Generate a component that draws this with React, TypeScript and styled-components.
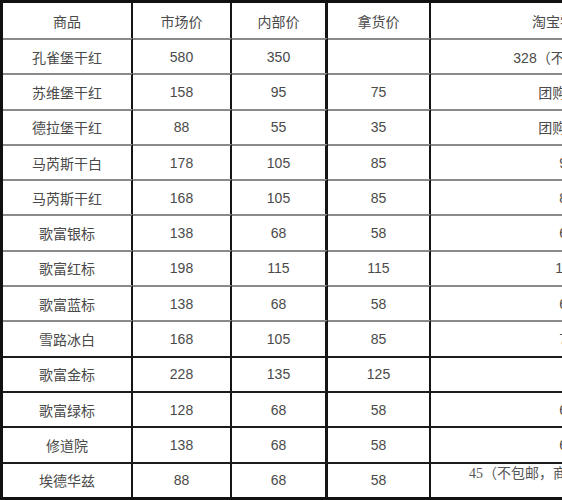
import React from 'react';
import styled, { createGlobalStyle } from 'styled-components';

const GlobalStyle = createGlobalStyle`
  html, body {
    margin: 0;
    padding: 0;
    background: #ffffff;
    overflow: hidden;
  }
`;

export const Page = styled.div`
  width: 562px;
  height: 500px;
  overflow: hidden;
  background: #fff;
`;

export const Table = styled.table`
  border-collapse: separate;
  border-spacing: 0;
  table-layout: fixed;
  width: 705px;
  border-top: 3px solid #111;
  border-left: 3px solid #111;
  border-bottom: 3px solid #111;
  font-family: 'Liberation Sans', 'Noto Sans CJK SC', sans-serif;
  font-size: 14px;
  color: #4a4a4a;
`;

export const HeadCell = styled.th<{ $w: number; $thick?: boolean }>`
  box-sizing: border-box;
  width: ${(p) => p.$w}px;
  height: 35px;
  padding: 0;
  font-weight: normal;
  text-align: center;
  vertical-align: middle;
  white-space: nowrap;
  overflow: hidden;
  border-right: ${(p) => (p.$thick ? 3 : 2)}px solid #151515;
`;

export const Cell = styled.td<{ $dark?: boolean; $thick?: boolean; $top?: boolean }>`
  box-sizing: border-box;
  height: 35.3px;
  padding: 0;
  text-align: center;
  vertical-align: ${(p) => (p.$top ? 'top' : 'middle')};
  white-space: nowrap;
  overflow: hidden;
  border-top: 2px solid ${(p) => (p.$dark ? '#1c1c1c' : '#8a8a8a')};
  border-right: ${(p) => (p.$thick ? 3 : 2)}px solid #151515;
`;

export const Note = styled.span`
  display: block;
  padding-top: 1px;
  line-height: 17px;
  font-family: 'Liberation Serif', 'Noto Sans CJK SC', serif;
  color: #555;
`;

type Row = { name: string; market: string; inner: string; pick: string; taobao: string; note?: boolean };

const rows: Row[] = [
  { name: '孔雀堡干红', market: '580', inner: '350', pick: '', taobao: '328（不包邮费）' },
  { name: '苏维堡干红', market: '158', inner: '95', pick: '75', taobao: '团购价98' },
  { name: '德拉堡干红', market: '88', inner: '55', pick: '35', taobao: '团购价58' },
  { name: '马芮斯干白', market: '178', inner: '105', pick: '85', taobao: '98' },
  { name: '马芮斯干红', market: '168', inner: '105', pick: '85', taobao: '88' },
  { name: '歌富银标', market: '138', inner: '68', pick: '58', taobao: '68' },
  { name: '歌富红标', market: '198', inner: '115', pick: '115', taobao: '168' },
  { name: '歌富蓝标', market: '138', inner: '68', pick: '58', taobao: '68' },
  { name: '雪路冰白', market: '168', inner: '105', pick: '85', taobao: '78' },
  { name: '歌富金标', market: '228', inner: '135', pick: '125', taobao: '' },
  { name: '歌富绿标', market: '128', inner: '68', pick: '58', taobao: '68' },
  { name: '修道院', market: '138', inner: '68', pick: '58', taobao: '68' },
  { name: '埃德华兹', market: '88', inner: '68', pick: '58', taobao: '45（不包邮，商家赠送开瓶器）', note: true },
];

export default function App() {
  return (
    <Page>
      <GlobalStyle />
      <Table>
        <thead>
          <tr>
            <HeadCell $w={130}>商品</HeadCell>
            <HeadCell $w={99}>市场价</HeadCell>
            <HeadCell $w={96} $thick>内部价</HeadCell>
            <HeadCell $w={103}>拿货价</HeadCell>
            <HeadCell $w={274}>淘宝零售价</HeadCell>
          </tr>
        </thead>
        <tbody>
          {rows.map((r, i) => {
            const dark = i >= 9;
            return (
              <tr key={r.name}>
                <Cell $dark={dark}>{r.name}</Cell>
                <Cell $dark={dark}>{r.market}</Cell>
                <Cell $dark={dark} $thick>{r.inner}</Cell>
                <Cell $dark={dark}>{r.pick}</Cell>
                <Cell $dark={dark} $top={r.note}>
                  {r.note ? <Note>{r.taobao}</Note> : r.taobao}
                </Cell>
              </tr>
            );
          })}
        </tbody>
      </Table>
    </Page>
  );
}
